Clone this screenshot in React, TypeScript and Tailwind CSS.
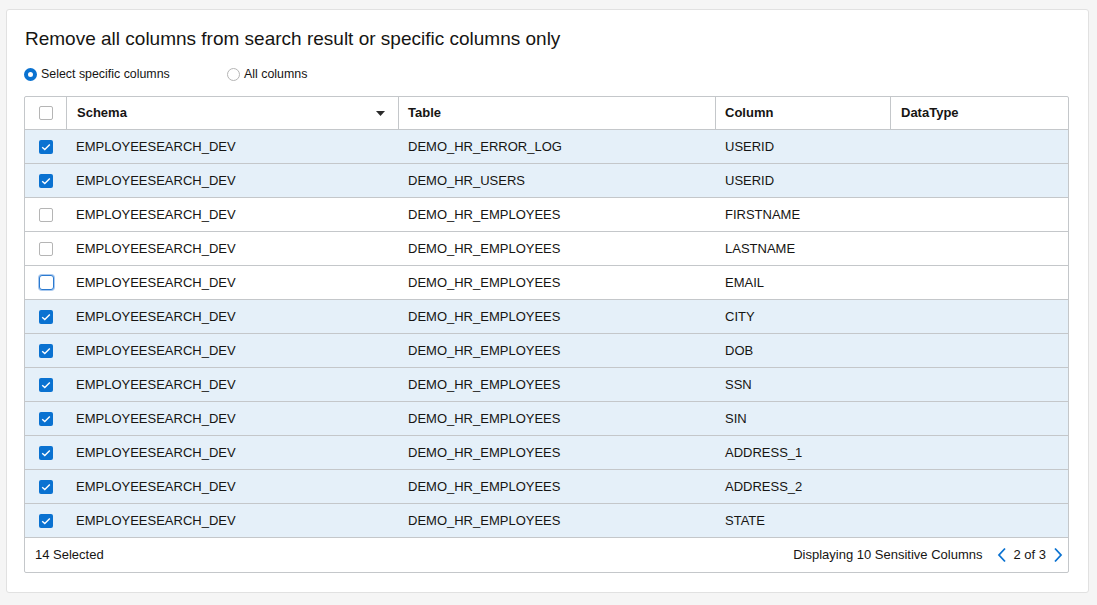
import { useState } from "react";

type Row = { schema: string; table: string; column: string; checked: boolean; focused?: boolean };

const rows: Row[] = [
  { schema: "EMPLOYEESEARCH_DEV", table: "DEMO_HR_ERROR_LOG", column: "USERID", checked: true },
  { schema: "EMPLOYEESEARCH_DEV", table: "DEMO_HR_USERS", column: "USERID", checked: true },
  { schema: "EMPLOYEESEARCH_DEV", table: "DEMO_HR_EMPLOYEES", column: "FIRSTNAME", checked: false },
  { schema: "EMPLOYEESEARCH_DEV", table: "DEMO_HR_EMPLOYEES", column: "LASTNAME", checked: false },
  { schema: "EMPLOYEESEARCH_DEV", table: "DEMO_HR_EMPLOYEES", column: "EMAIL", checked: false, focused: true },
  { schema: "EMPLOYEESEARCH_DEV", table: "DEMO_HR_EMPLOYEES", column: "CITY", checked: true },
  { schema: "EMPLOYEESEARCH_DEV", table: "DEMO_HR_EMPLOYEES", column: "DOB", checked: true },
  { schema: "EMPLOYEESEARCH_DEV", table: "DEMO_HR_EMPLOYEES", column: "SSN", checked: true },
  { schema: "EMPLOYEESEARCH_DEV", table: "DEMO_HR_EMPLOYEES", column: "SIN", checked: true },
  { schema: "EMPLOYEESEARCH_DEV", table: "DEMO_HR_EMPLOYEES", column: "ADDRESS_1", checked: true },
  { schema: "EMPLOYEESEARCH_DEV", table: "DEMO_HR_EMPLOYEES", column: "ADDRESS_2", checked: true },
  { schema: "EMPLOYEESEARCH_DEV", table: "DEMO_HR_EMPLOYEES", column: "STATE", checked: true },
];

function Checkbox({ checked, focused }: { checked: boolean; focused?: boolean }) {
  if (checked) {
    return (
      <span className="w-[14px] h-[14px] rounded-[2px] bg-[#0a72d1] flex items-center justify-center">
        <svg width="10" height="8" viewBox="0 0 10 8" fill="none">
          <path d="M1.2 4.2 L3.8 6.6 L8.8 1.4" stroke="white" strokeWidth="1.4" />
        </svg>
      </span>
    );
  }
  if (focused) {
    return (
      <span className="w-[15px] h-[15px] rounded-[3px] border-[1.5px] border-[#2b7ad0] bg-white shadow-[0_0_0_1px_#a9c9ef]" />
    );
  }
  return <span className="w-[14px] h-[14px] rounded-[2px] border border-[#b5b5b5] bg-white" />;
}

const cols = "grid grid-cols-[42px_332px_317px_175px_1fr]";

export default function App() {
  const [mode, setMode] = useState("specific");

  return (
    <div className="min-h-screen bg-[#f5f5f5] pt-[9px] pl-[6px] pr-[8px] font-['Liberation_Sans',Arial,sans-serif] text-[#161513]">
      <div className="bg-white border border-[#e1e1e1] rounded-[3px] pt-[18px] pl-[17px] pr-[19px] pb-[19px]">
        <h1 className="text-[19px] leading-[22px] pl-[1px] text-[#161513]">
          Remove all columns from search result or specific columns only
        </h1>

        <div className="flex items-center mt-[17px] text-[12.4px] h-[15px]">
          <button className="flex items-center gap-[4px] w-[203px]" onClick={() => setMode("specific")}>
            <span
              className={
                mode === "specific"
                  ? "w-[13px] h-[13px] rounded-full border-[4px] border-[#0a72d1] bg-white"
                  : "w-[13px] h-[13px] rounded-full border border-[#b5b5b5] bg-white"
              }
            />
            Select specific columns
          </button>
          <button className="flex items-center gap-[4px]" onClick={() => setMode("all")}>
            <span
              className={
                mode === "all"
                  ? "w-[13px] h-[13px] rounded-full border-[4px] border-[#0a72d1] bg-white"
                  : "w-[13px] h-[13px] rounded-full border border-[#b5b5b5] bg-white"
              }
            />
            All columns
          </button>
        </div>

        <div className="mt-[14px] border border-[#c4c7ca] rounded-[2px] text-[13px]">
          <div className={`${cols} h-[33px] font-bold border-b border-[#c4c7ca]`}>
            <div className="flex items-center justify-center border-r border-[#c4c7ca]">
              <Checkbox checked={false} />
            </div>
            <div className="flex items-center justify-between pl-[10px] pr-[13px] border-r border-[#c4c7ca]">
              Schema
              <svg width="9" height="5" viewBox="0 0 9 5">
                <path d="M0 0 H9 L4.5 5 Z" fill="#2b2b2b" />
              </svg>
            </div>
            <div className="flex items-center pl-[9px] border-r border-[#c4c7ca]">Table</div>
            <div className="flex items-center pl-[9px] border-r border-[#c4c7ca]">Column</div>
            <div className="flex items-center pl-[10px]">DataType</div>
          </div>

          {rows.map((r, i) => (
            <div
              key={i}
              className={`${cols} h-[34px] border-b border-[#c4c7ca] ${r.checked ? "bg-[#e5f0f9]" : "bg-white"}`}
            >
              <div className="flex items-center justify-center">
                <Checkbox checked={r.checked} focused={r.focused} />
              </div>
              <div className="flex items-center pl-[9px]">{r.schema}</div>
              <div className="flex items-center pl-[9px]">{r.table}</div>
              <div className="flex items-center pl-[9px]">{r.column}</div>
              <div />
            </div>
          ))}

          <div className="h-[34px] flex items-center justify-between pl-[10px] pr-[5px] text-[13px]">
            <span>14 Selected</span>
            <div className="flex items-center">
              <span>Displaying 10 Sensitive Columns</span>
              <svg className="ml-[15px]" width="10" height="16" viewBox="0 0 10 16" fill="none">
                <path d="M8 1.5 L2 8 L8 14.5" stroke="#0a72d1" strokeWidth="1.8" />
              </svg>
              <span className="ml-[6px]">2 of 3</span>
              <svg className="ml-[7px]" width="10" height="16" viewBox="0 0 10 16" fill="none">
                <path d="M2 1.5 L8 8 L2 14.5" stroke="#0a72d1" strokeWidth="1.8" />
              </svg>
            </div>
          </div>
        </div>
      </div>
    </div>
  );
}
